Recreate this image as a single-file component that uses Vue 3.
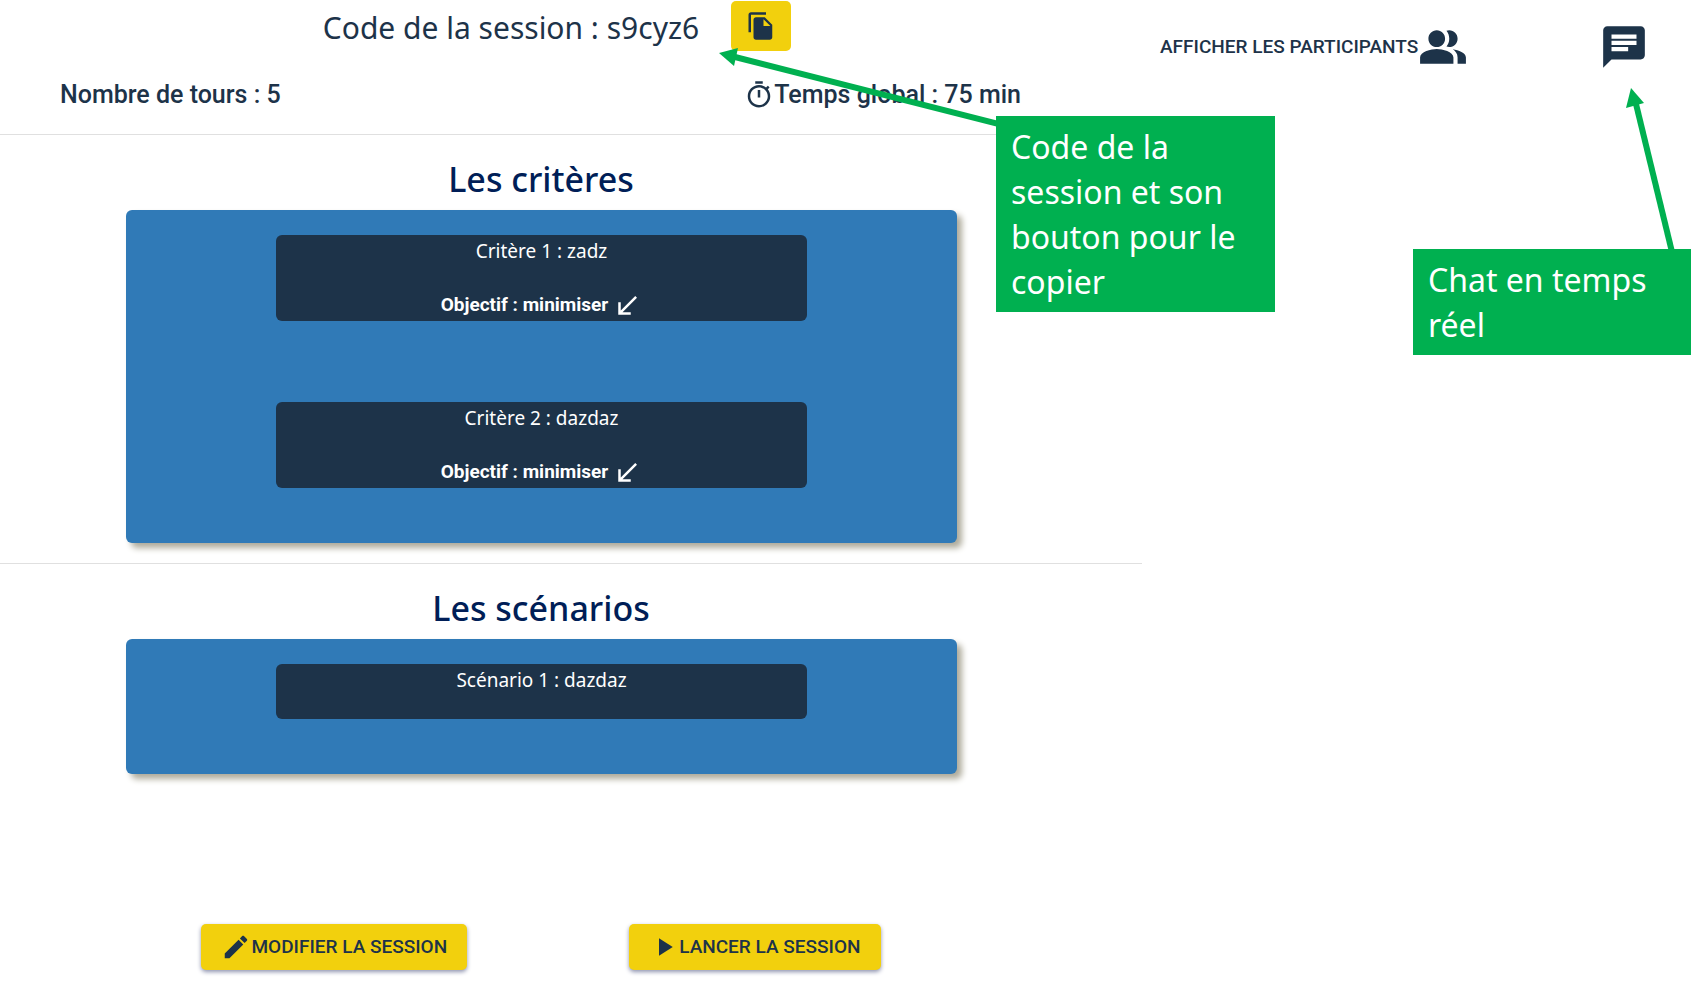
<script setup>
const criteria = [
  { name: 'Critère 1 : zadz', goal: 'Objectif : minimiser' },
  { name: 'Critère 2 : dazdaz', goal: 'Objectif : minimiser' },
]
const scenarios = ['Scénario 1 : dazdaz']
</script>

<template>
  <div class="page">
    <main class="session">
      <header class="title-row">
        <h1 class="title">Code de la session : s9cyz6</h1>
        <button class="copy" type="button" aria-label="Copier le code">
          <svg class="icon" viewBox="0 0 24 24"><path d="M16 1H4c-1.1 0-2 .9-2 2v14h2V3h12V1zm-1 4l6 6v10c0 1.1-.9 2-2 2H7.99C6.89 23 6 22.1 6 21V7c0-1.1.89-2 1.99-2h7zm-1 7h5.5L14 6.5V12z" /></svg>
        </button>
      </header>

      <div class="info">
        <span>Nombre de tours : 5</span>
        <span class="time">
          <svg class="icon" viewBox="0 0 24 24"><path d="M15 1H9v2h6V1zm-4 13h2V8h-2v6zm8.03-6.61l1.42-1.42c-.43-.51-.9-.99-1.41-1.41l-1.42 1.42C16.07 4.74 14.12 4 12 4c-4.97 0-9 4.03-9 9s4.02 9 9 9 9-4.03 9-9c0-2.12-.74-4.07-1.97-5.61zM12 20c-3.87 0-7-3.13-7-7s3.13-7 7-7 7 3.13 7 7-3.13 7-7 7z" /></svg>
          <span>Temps global : 75 min</span>
        </span>
      </div>

      <section class="block">
        <h2 class="heading">Les critères</h2>
        <div class="panel">
          <article v-for="c in criteria" :key="c.name" class="card criterion">
            <span class="name">{{ c.name }}</span>
            <span class="goal">
              <span>{{ c.goal }}</span>
              <svg class="icon" viewBox="0 0 24 24"><path d="M15 19v-2H8.41L20 5.41 18.59 4 7 15.59V9H5v10h10z" /></svg>
            </span>
          </article>
        </div>
      </section>

      <section class="block">
        <h2 class="heading">Les scénarios</h2>
        <div class="panel">
          <article v-for="s in scenarios" :key="s" class="card scenario">
            <span class="name">{{ s }}</span>
          </article>
        </div>
      </section>

      <div class="actions">
        <button class="action" type="button">
          <svg class="icon" viewBox="0 0 24 24"><path d="M3 17.25V21h3.75L17.81 9.94l-3.75-3.75L3 17.25zM20.71 7.04c.39-.39.39-1.02 0-1.41l-2.34-2.34c-.39-.39-1.02-.39-1.41 0l-1.83 1.83 3.75 3.75 1.83-1.83z" /></svg>
          <span>MODIFIER LA SESSION</span>
        </button>
        <button class="action" type="button">
          <svg class="icon" viewBox="0 0 24 24"><path d="M8 5v14l11-7z" /></svg>
          <span>LANCER LA SESSION</span>
        </button>
      </div>
    </main>

    <aside class="side">
      <button class="plain" type="button">
        <span>AFFICHER LES PARTICIPANTS</span>
        <svg class="icon-large" viewBox="0 0 24 24"><path d="M16.67 13.13C18.04 14.06 19 15.32 19 17v3h4v-3c0-2.18-3.57-3.47-6.33-3.87zM15 12c2.21 0 4-1.79 4-4s-1.79-4-4-4c-.47 0-.91.1-1.33.24C14.5 5.27 15 6.58 15 8s-.5 2.73-1.33 3.76c.42.14.86.24 1.33.24zM9 12c2.21 0 4-1.79 4-4s-1.79-4-4-4-4 1.79-4 4 1.79 4 4 4zM9 13c-2.67 0-8 1.34-8 4v3h16v-3c0-2.66-5.33-4-8-4z" /></svg>
      </button>
      <button class="plain" type="button" aria-label="Ouvrir le chat">
        <svg class="icon-large" viewBox="0 0 24 24"><path d="M20 2H4c-1.1 0-1.99.9-1.99 2L2 22l4-4h14c1.1 0 2-.9 2-2V4c0-1.1-.9-2-2-2zM6 9h12v2H6V9zm8 5H6v-2h8v2zm4-6H6V6h12v2z" /></svg>
      </button>
    </aside>

    <!-- Annotations laid over the page -->
    <svg class="arrow arrow-code" viewBox="0 0 280 82">
      <path d="M16 9L280 76" />
      <polygon points="0,5 19,0 15,18" />
    </svg>
    <p class="note note-code">Code de la session et son bouton pour le copier</p>
    <svg class="arrow arrow-chat" viewBox="0 0 52 164">
      <path d="M10 16L46 164" />
      <polygon points="5,0 0,20 18,15" />
    </svg>
    <p class="note note-chat">Chat en temps réel</p>
  </div>
</template>

<style>
body {
  margin: 0;
  background: #fff;
}
</style>

<style scoped>
.page {
  position: relative;
  display: flex;
  align-items: flex-start;
  min-height: 100vh;
  overflow: hidden;
  color: #1d3349;
  font-family: Roboto, "Liberation Sans", sans-serif;
}
.page * {
  box-sizing: border-box;
}
.session {
  flex: 0 0 68%;
  max-width: 1142px;
}
.title-row {
  display: flex;
  justify-content: center;
  align-items: center;
  gap: 32px;
  padding-top: 1px;
  padding-right: 28px;
}
.title {
  margin: 0;
  padding-top: 4px;
  font: 400 30px/46px "Noto Sans", "Open Sans", sans-serif;
}
button {
  border: 0;
  padding: 0;
  background: none;
  color: inherit;
  font: 500 19px/30px Roboto, "Liberation Sans", sans-serif;
  cursor: pointer;
}
.copy,
.action {
  display: flex;
  align-items: center;
  background: #f2d00d;
  border-radius: 5px;
}
.copy {
  justify-content: center;
  width: 60px;
  height: 50px;
}
svg {
  display: block;
  flex: none;
  fill: currentColor;
}
.icon {
  width: 30px;
  height: 30px;
}
.icon-large {
  width: 50px;
  height: 50px;
}
.info {
  display: flex;
  justify-content: space-between;
  align-items: center;
  height: 83px;
  padding: 4px 121px 0 60px;
  font-size: 25px;
  font-weight: 500;
}
.time {
  display: flex;
  align-items: center;
}
.block {
  border-top: 1px solid #e0e0e0;
  padding: 20px 60px 20px 0;
}
.heading {
  margin: 0;
  text-align: center;
  color: #001e57;
  font: 500 34px/48px "Noto Sans", "Open Sans", sans-serif;
}
.panel {
  display: flex;
  flex-direction: column;
  gap: 81px;
  margin: 7px 125px 0 126px;
  padding: 25px 150px 55px;
  background: #307ab7;
  border-radius: 6px;
  box-shadow: 5px 5px 6px #aeab9b;
}
.card {
  display: flex;
  flex-direction: column;
  align-items: center;
  background: #1d3349;
  border-radius: 6px;
  color: #fff;
}
.criterion {
  height: 86px;
  justify-content: space-between;
}
.scenario {
  height: 55px;
}
.name {
  font: 400 19px/32px "Noto Sans", "Open Sans", sans-serif;
}
.goal {
  display: flex;
  gap: 4px;
  font-size: 19px;
  font-weight: 700;
  line-height: 28px;
}
.actions {
  display: flex;
  justify-content: center;
  gap: 162px;
  padding: 130px 60px 16px 0;
}
.action {
  height: 46px;
  padding: 0 20px;
  box-shadow: 0 2px 4px #8f94b0;
}
.side {
  display: flex;
  flex: 1;
  justify-content: space-between;
  align-items: flex-start;
  padding: 22px 42px 0 18px;
}
.plain {
  display: flex;
  align-items: center;
}
.note {
  position: absolute;
  margin: 0;
  padding: 8px 15px;
  background: #00b050;
  color: #fff;
  font: 400 32px/45px "Noto Sans", "Open Sans", sans-serif;
}
.note-code {
  left: 996px;
  top: 116px;
  width: 279px;
}
.note-chat {
  right: 0;
  top: 249px;
  width: 278px;
}
.arrow {
  position: absolute;
  fill: #00b050;
  stroke: none;
}
.arrow path {
  stroke: #00b050;
  stroke-width: 6;
}
.arrow-code {
  left: 719px;
  top: 48px;
  width: 280px;
}
.arrow-chat {
  right: 13px;
  top: 88px;
  width: 52px;
}
</style>
